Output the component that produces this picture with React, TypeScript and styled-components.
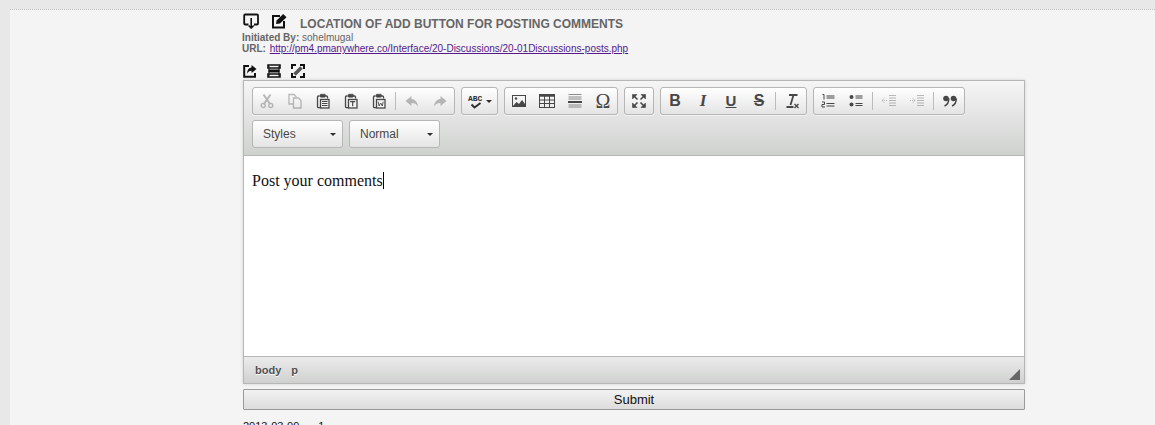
import React from "react";
import styled, { createGlobalStyle } from "styled-components";

const Global = createGlobalStyle`
  html, body { margin: 0; padding: 0; height: 425px; overflow: hidden; background: #e8e8e8; }
  #root { height: 425px; }
`;
const Page = styled.div`
  display: flex; height: 425px; overflow: hidden; background: #e8e8e8;
  font-family: "Liberation Sans", Arial, sans-serif;
`;
const Main = styled.div`
  margin: 9px 0 0 10px; flex: 1; background: #f4f4f4;
  border-top: 1px dotted #bdbdbd;
  padding: 0 130px 0 232px; min-width: 0; overflow: hidden;
`;
const TitleRow = styled.div`
  display: flex; align-items: center; height: 19px; margin: 3px 0 0 1px;
`;
const HeadIcon = styled.svg`
  width: 17px; height: 16px; margin: -3px 11px 0 0; flex: none; color: #111; display: block;
`;
const Title = styled.h1`
  margin: 2px 0 0 1px; font-size: 12px; line-height: 14px; font-weight: 700; color: #666;
`;
const Meta = styled.div`
  font-size: 10px; line-height: 11px; color: #666; white-space: nowrap;
  b { font-weight: 700; }
`;
const MetaLink = styled.a`
  color: #551a8b; text-decoration: underline; margin-left: 1px;
`;
const ActionRow = styled.div`
  display: flex; gap: 10px; margin: 9px 0 0 1px; height: 16px; align-items: center;
`;
const ActionIcon = styled.svg`
  width: 14px; height: 14px; display: block; color: #111;
`;
const Frame = styled.div`
  margin: 1px 0 0 1px; width: 780px; border: 1px solid #b6b6b6;
  box-shadow: 0 0 3px rgba(0,0,0,.15); background: #fff;
`;
const Toolbar = styled.div`
  height: 75px; box-sizing: border-box; padding: 6px 8px 0;
  background: linear-gradient(#f5f5f5, #cfd1cf);
  border-bottom: 1px solid #b6b6b6;
  display: flex; flex-direction: column; gap: 5px;
`;
const ToolRow = styled.div` display: flex; gap: 6px; `;
const Group = styled.div`
  display: flex; align-items: center; height: 28px; box-sizing: border-box;
  border: 1px solid #b6b6b6; border-radius: 3px;
  background: linear-gradient(#fff, #e4e4e4);
  box-shadow: 0 1px 0 rgba(255,255,255,.5);
`;
const Btn = styled.div<{ $w?: number; $off?: boolean }>`
  width: ${p => p.$w ?? 28}px; height: 26px; display: flex; align-items: center; justify-content: center; gap: 2px;
  color: #474747; opacity: ${p => (p.$off ? 0.35 : 1)};
  svg { display: block; width: 16px; height: 16px; }
`;
const Sep = styled.span`
  width: 1px; height: 18px; margin: 0 2px; background: #bcbcbc; flex: none;
`;
const Glyph = styled.span<{ $italic?: boolean; $under?: boolean; $strike?: boolean; $serif?: boolean; $size?: number; $light?: boolean }>`
  font-family: ${p => (p.$serif ? '"Liberation Serif", serif' : '"Liberation Sans", Arial, sans-serif')};
  font-weight: ${p => (p.$light ? 400 : 700)}; font-size: ${p => p.$size ?? 16}px; line-height: 16px; color: #474747;
  font-style: ${p => (p.$italic ? "italic" : "normal")};
  text-decoration: ${p => (p.$under ? "underline" : p.$strike ? "line-through" : "none")};
`;
const Caret = styled.span`
  width: 0; height: 0; border-left: 3px solid transparent; border-right: 3px solid transparent;
  border-top: 3px solid #2f2f2f;
`;
const Combo = styled.div<{ $w: number }>`
  width: ${p => p.$w}px; height: 28px; box-sizing: border-box; padding: 0 6px 0 10px;
  display: flex; align-items: center; justify-content: space-between;
  border: 1px solid #b6b6b6; border-radius: 3px;
  background: linear-gradient(#fff, #e4e4e4);
  font-size: 12px; color: #484848;
`;
const Body = styled.div`
  height: 200px; box-sizing: border-box; background: #fff; padding: 16px 8px 0;
  font-family: "Liberation Serif", "Times New Roman", serif; font-size: 16px; line-height: 18px; color: #111;
  span { border-right: 1px solid #000; }
`;
const Bottom = styled.div`
  height: 27px; box-sizing: border-box; border-top: 1px solid #b6b6b6;
  background: linear-gradient(#ebebeb, #cfd1cf);
  display: flex; align-items: center; gap: 10px; padding: 0 5px 1px 11px; position: relative;
  font-size: 11px; font-weight: 700; color: #505050; text-shadow: 0 1px 0 #fff;
`;
const Resize = styled.svg`
  position: absolute; right: 4px; bottom: 3px; width: 11px; height: 11px; display: block;
`;
const Submit = styled.button`
  display: block; width: 782px; height: 21px; margin: 5px 0 0 1px; padding: 0; box-sizing: border-box;
  border: 1px solid #9a9a9a; border-radius: 1px;
  background: linear-gradient(#f2f2f2, #dcdcdc);
  font: 13px/17px "Liberation Sans", Arial, sans-serif; color: #111;
`;
const Footer = styled.div`
  margin: 10px 0 0 1px; font-size: 11px; line-height: 13px; color: #111; display: flex; gap: 19px;
`;

const S = (p: { children: React.ReactNode }) => (
  <svg viewBox="0 0 16 16" fill="none" stroke="currentColor" strokeWidth="1.3">{p.children}</svg>
);
const Paste = ({ k }: { k: string }) => (
  <S>
    <path d="M4.500 3H3.500C2.800 3 2.500 3.400 2.500 4V13.500C2.500 14.200 3 14.700 3.500 14.700H5.500" />
    <path d="M12.500 5.500V4C12.500 3.400 12.200 3 11.500 3H10.500" />
    <rect x="5" y="1.200" width="5.500" height="3" rx="1" fill="currentColor" strokeWidth=".6" />
    <rect x="5.500" y="6.500" width="8.500" height="8.500" fill="#f4f4f4" />
    {k === "l" && <path d="M7 8.500h5.500M7 10.500h5.500M7 12.500h5.500" strokeWidth="1" />}
    {k === "t" && <path d="M7.200 8.700h5M9.700 8.700v4.600" strokeWidth="1.200" />}
    {k === "w" && <path d="M7.200 8.700l.9 4.300 1.600-3 1.600 3 .9-4.300" strokeWidth=".9" />}
  </S>
);

export default function App() {
  return (
    <Page>
      <Global />
      <Main>
        <TitleRow>
          <HeadIcon viewBox="0 0 17 16" fill="none" stroke="currentColor" strokeWidth="1.800">
            <path d="M5.500 11.500H2.200C1.600 11.500 1.200 11.100 1.200 10.500V2.500C1.200 1.900 1.600 1.500 2.200 1.500H14C14.600 1.500 15 1.900 15 2.500V10.500C15 11.100 14.600 11.500 14 11.500H11" />
            <path d="M8.200 5V15M5.700 12.500l2.500 2.500 2.500-2.500" strokeWidth="1.600" />
          </HeadIcon>
          <HeadIcon viewBox="0 0 17 16" fill="none" stroke="currentColor" strokeWidth="2">
            <path d="M9 3H2v11.500h11V8" />
            <path d="M5 11l.6-3.500L12.200 1l3.300 3.200L9 10.500z" fill="currentColor" stroke="none" />
          </HeadIcon>
          <Title>LOCATION OF ADD BUTTON FOR POSTING COMMENTS</Title>
        </TitleRow>
        <Meta><b>Initiated By:</b> sohelmugal</Meta>
        <Meta><b>URL:</b> <MetaLink href="#">http://pm4.pmanywhere.co/Interface/20-Discussions/20-01Discussions-posts.php</MetaLink></Meta>
        <ActionRow>
          <ActionIcon viewBox="0 0 14 14" fill="none" stroke="currentColor" strokeWidth="2">
            <path d="M6 2H1.200v10.800H12V9" />
            <path d="M8.500 1l5 4-5 4V6.700C6 6.700 4.800 8 4 10c0-4 1.800-6.200 4.500-6.500z" fill="currentColor" stroke="none" />
          </ActionIcon>
          <ActionIcon viewBox="0 0 14 14" fill="none" stroke="currentColor" strokeWidth="1.600">
            <path d="M1 1h12v3H1zM1 10h12v3H1z" />
            <path d="M1.500 7h11" strokeWidth="3" />
            <path d="M2 1.800v10.400M12 1.800v10.400" strokeWidth="1" />
          </ActionIcon>
          <ActionIcon viewBox="0 0 14 14" fill="none" stroke="currentColor" strokeWidth="2">
            <path d="M1 5V1h4M9 1h4v4M13 9v4H9M5 13H1V9" />
            <path d="M3.500 10.500l7-7" strokeWidth="3.500" opacity=".7" />
          </ActionIcon>
        </ActionRow>
        <Frame>
          <Toolbar>
            <ToolRow>
              <Group>
                <Btn $off><S><circle cx="4.200" cy="12.500" r="2" /><circle cx="11.800" cy="12.500" r="2" /><path d="M5 11L11.500 1.500M11 11L4.500 1.500" strokeWidth="2" /></S></Btn>
                <Btn $off><S><path d="M6 11H2V1.500h5l2 2v1" /><path d="M6.500 5h5L14 7.500v7.500H6.500z" /></S></Btn>
                <Btn><Paste k="l" /></Btn>
                <Btn><Paste k="t" /></Btn>
                <Btn><Paste k="w" /></Btn>
                <Sep />
                <Btn $off><S><path d="M7.500 3L1.500 8l6 5V10c3 0 5 1 6.500 3.500C13.500 9 11 6.200 7.500 6z" fill="currentColor" stroke="none" /></S></Btn>
                <Btn $off><S><path d="M8.500 3l6 5-6 5V10c-3 0-5 1-6.500 3.500C2.500 9 5 6.200 8.500 6z" fill="currentColor" stroke="none" /></S></Btn>
              </Group>
              <Group>
                <Btn $w={35}>
                  <svg viewBox="0 0 16 16" fill="none" stroke="currentColor" style={{ color: "#2f2f2f" }}>
                    <text x="0" y="8" fontFamily="Liberation Mono" fontSize="8" fontWeight="700" fill="currentColor" stroke="none">ABC</text>
                    <path d="M3.500 11.500l3 3 6-4.500" strokeWidth="2" />
                  </svg>
                  <Caret />
                </Btn>
              </Group>
              <Group>
                <Btn><S><rect x="1.500" y="2.500" width="13" height="11" strokeWidth="1" /><path d="M2 13l3.500-4 2.500 2 3-4 3 4v2z" fill="currentColor" stroke="none" /><circle cx="5" cy="5.500" r="1.200" fill="currentColor" stroke="none" /></S></Btn>
                <Btn><S><rect x=".5" y="1.500" width="15" height="13" strokeWidth="1" /><path d="M.5 2.500h15" strokeWidth="2.500" /><path d="M.5 7h15M.5 10.500h15M5.500 3v11M10.500 3v11" strokeWidth="1" /></S></Btn>
                <Btn><S><path d="M1.500 1.500h13M1.500 4h13M1.500 6h13M1.500 12h13M1.500 14h13" strokeWidth="1" opacity=".6" /><path d="M1 9h14" strokeWidth="2" /></S></Btn>
                <Btn><Glyph $serif $light $size={20}>Ω</Glyph></Btn>
              </Group>
              <Group>
                <Btn><S><path d="M1.500 6V1.500H6zM10 1.500h4.500V6zM14.500 10v4.500H10zM6 14.500H1.500V10z" fill="currentColor" strokeWidth=".6" /><path d="M3 3l3.500 3.500M13 3L9.500 6.500M13 13L9.500 9.500M3 13l3.500-3.500" strokeWidth="1.500" /></S></Btn>
              </Group>
              <Group>
                <Btn><Glyph>B</Glyph></Btn>
                <Btn><Glyph $italic $serif $size={17}>I</Glyph></Btn>
                <Btn><Glyph $under $size={15}>U</Glyph></Btn>
                <Btn><Glyph $strike>S</Glyph></Btn>
                <Sep />
                <Btn>
                  <S>
                    <path d="M5 2h8.500M9.500 2L6.500 12M2.500 14h7" strokeWidth="1.800" />
                    <path d="M10.500 11l4 4M14.500 11l-4 4" strokeWidth="1.300" />
                  </S>
                </Btn>
              </Group>
              <Group>
                <Btn><S><path d="M6.500 3h8M6.500 5h8M6.500 10.500h8M6.500 13h8" strokeWidth="1.200" /><path d="M2.500 1.500h1.500V6.500M2 9h2.500v2.500H2V14h3" strokeWidth="1" /></S></Btn>
                <Btn><S><circle cx="3.500" cy="4" r="2" fill="currentColor" stroke="none" /><circle cx="3.500" cy="11.500" r="2" fill="currentColor" stroke="none" /><path d="M7.500 3h7M7.500 5h7M7.500 10.500h7M7.500 12.500h7" strokeWidth="1.200" /></S></Btn>
                <Sep />
                <Btn $off><S><path d="M8 2.500h7M8 5h7M8 7.500h7M8 10h7M8 12.500h7" strokeWidth="1" /><path d="M1 7.500h5M3.500 5l-2.500 2.500L3.500 10" strokeWidth="1" strokeDasharray="1 1" /></S></Btn>
                <Btn $off><S><path d="M8 2.500h7M8 5h7M8 7.500h7M8 10h7M8 12.500h7" strokeWidth="1" /><path d="M1 7.500h5M3.500 5L6 7.500 3.500 10" strokeWidth="1" strokeDasharray="1 1" /></S></Btn>
                <Sep />
                <Btn>
                  <S>
                    <circle cx="4" cy="5.500" r="2.800" fill="currentColor" stroke="none" />
                    <circle cx="11.500" cy="5.500" r="2.800" fill="currentColor" stroke="none" />
                    <path d="M6.800 5.500C6.800 9 5 12 2.500 13M14.300 5.500C14.300 9 12.500 12 10 13" strokeWidth="1.500" />
                  </S>
                </Btn>
              </Group>
            </ToolRow>
            <ToolRow>
              <Combo $w={91}>Styles<Caret /></Combo>
              <Combo $w={91}>Normal<Caret /></Combo>
            </ToolRow>
          </Toolbar>
          <Body><span>Post your comments</span></Body>
          <Bottom>
            <span>body</span><span>p</span>
            <Resize viewBox="0 0 11 11"><path d="M11 0V11H0z" fill="#666" /></Resize>
          </Bottom>
        </Frame>
        <Submit>Submit</Submit>
        <Footer><span>2013-03-09</span><span>1</span></Footer>
      </Main>
    </Page>
  );
}
